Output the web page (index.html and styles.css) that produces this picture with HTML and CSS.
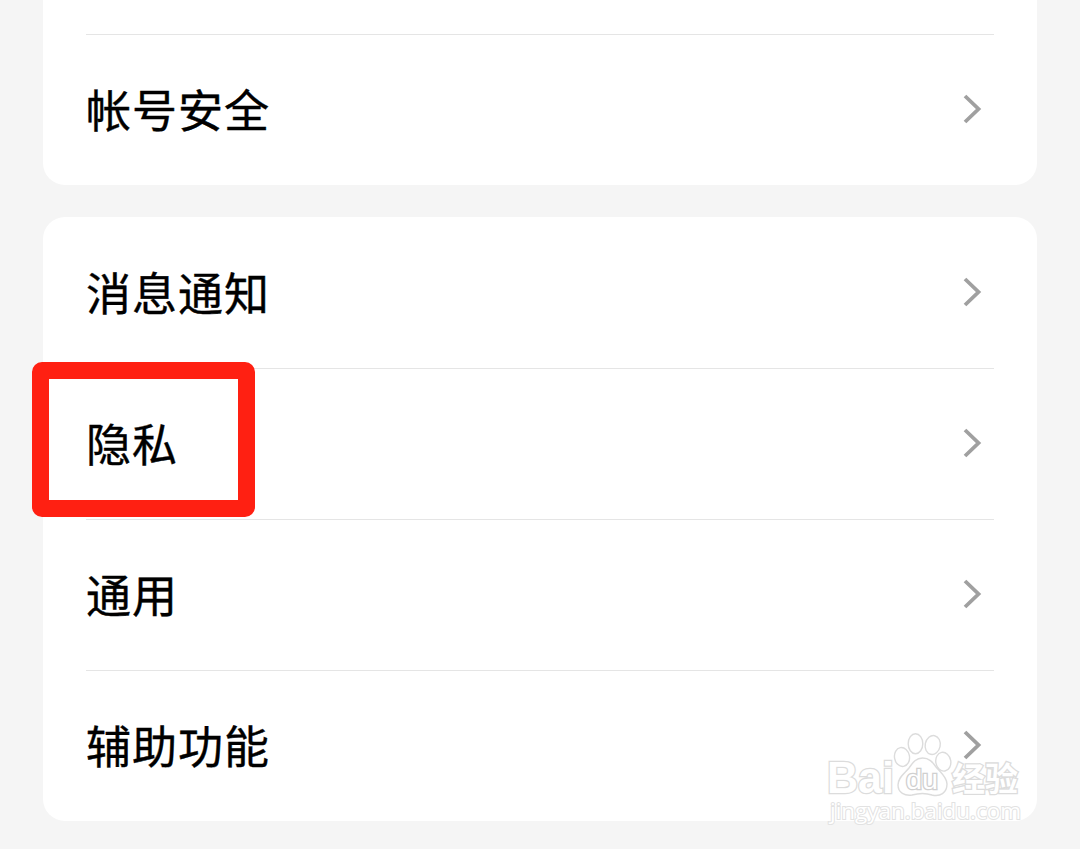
FILE: index.html
```html
<!DOCTYPE html>
<html lang="zh-CN">
<head>
  <meta charset="UTF-8">
  <meta name="viewport" content="width=device-width, initial-scale=1.0">
  <link rel="stylesheet" href="styles.css">
  <title>设置</title>
</head>
<body>
  <main class="settings">
    <section class="card card-top">
      <div class="row">
        <span class="label">帐号安全</span>
        <svg class="arrow" viewBox="0 0 20 32"><path d="M3 3L16.500 16L3 29"/></svg>
      </div>
    </section>

    <section class="card">
      <div class="row">
        <span class="label">消息通知</span>
        <svg class="arrow" viewBox="0 0 20 32"><path d="M3 3L16.500 16L3 29"/></svg>
      </div>
      <div class="row">
        <span class="label">隐私</span>
        <svg class="arrow" viewBox="0 0 20 32"><path d="M3 3L16.500 16L3 29"/></svg>
        <div class="highlight"></div>
      </div>
      <div class="row">
        <span class="label">通用</span>
        <svg class="arrow" viewBox="0 0 20 32"><path d="M3 3L16.500 16L3 29"/></svg>
      </div>
      <div class="row">
        <span class="label">辅助功能</span>
        <svg class="arrow" viewBox="0 0 20 32"><path d="M3 3L16.500 16L3 29"/></svg>
      </div>
    </section>
  </main>

  <!-- watermark -->
  <svg class="watermark" viewBox="0 0 210 100">
    <text class="wm-bold" x="5" y="63" font-size="44" textLength="67" lengthAdjust="spacingAndGlyphs">Bai</text>
    <ellipse cx="80" cy="27" rx="7.500" ry="9.500" transform="rotate(-10 80 27)"/>
    <ellipse cx="93.500" cy="13.700" rx="7.300" ry="10"/>
    <ellipse cx="110.700" cy="15" rx="7.500" ry="9.500" transform="rotate(12 110.700 15)"/>
    <ellipse cx="121.300" cy="31.700" rx="7.500" ry="9.500" transform="rotate(-10 121.300 31.700)"/>
    <path d="M100.500 28C93 28 90 34 87 38C83 43 76 47 76 55C76 63 83 66 90 65C97 63 104 63 110 65C118 67 125 63 125 54C125 47 118 42 114 37C111 33 108 28 100.500 28Z"/>
    <text class="wm-du" x="84" y="58.500" font-size="27" textLength="32" lengthAdjust="spacingAndGlyphs">du</text>
    <text class="wm-cjk" x="130" y="61" font-size="33">经验</text>
    <text class="wm-url" x="8" y="89" font-size="22" textLength="191" lengthAdjust="spacingAndGlyphs">jingyan.baidu.com</text>
  </svg>
</body>
</html>
```

FILE: styles.css
```css
* {
  box-sizing: border-box;
}

body {
  margin: 0;
  height: 849px;
  overflow: hidden;
  position: relative;
  background-color: #f5f5f5;
  font-family: "Noto Sans CJK SC", sans-serif;
}

.settings {
  display: flex;
  flex-direction: column;
  gap: 32px;
  padding: 0 43px;
}

.card {
  background-color: #fff;
  border-radius: 22px;
  padding: 0 43px;
}

.card-top {
  border-radius: 0 0 22px 22px;
  padding-top: 34px;
}

.row {
  display: flex;
  justify-content: space-between;
  align-items: center;
  position: relative;
  height: 151px;
  padding-right: 10px;
}

.row + .row::before,
.card-top .row::before {
  content: "";
  position: absolute;
  top: 0;
  left: 0;
  width: 908px;
  height: 1px;
  background-color: #e5e5e5;
}

.label {
  font-size: 45px;
  line-height: 60px;
  letter-spacing: 1px;
  margin-bottom: 2px;
  color: #000;
  -webkit-text-stroke: 0.4px #000;
}

.arrow {
  width: 20px;
  height: 32px;
  margin: 0 2px 2px 0;
  fill: none;
  stroke: #a0a0a0;
  stroke-width: 3.8;
}

/* red frame around the row title */
.highlight {
  position: absolute;
  left: -54px;
  top: -6px;
  width: 223px;
  height: 155px;
  border: 17px solid #ff2012;
  border-radius: 10px;
}

.watermark {
  position: absolute;
  left: 822px;
  top: 730px;
  width: 210px;
  height: 100px;
  fill: #fff;
  stroke: #dcdcdc;
  stroke-width: 1.4;
}

.watermark text {
  paint-order: stroke;
  stroke-width: 2.6;
}

.watermark .wm-bold {
  font-family: "Liberation Sans", sans-serif;
  font-weight: bold;
}

.watermark .wm-du {
  font-family: "Liberation Sans", sans-serif;
  stroke: #d0d0d0;
}

.watermark .wm-cjk {
  font-family: "Noto Sans CJK SC", sans-serif;
  font-weight: bold;
}

.watermark .wm-url {
  font-family: "Open Sans", sans-serif;
  stroke: #e2e2e2;
  stroke-width: 2;
}
```
